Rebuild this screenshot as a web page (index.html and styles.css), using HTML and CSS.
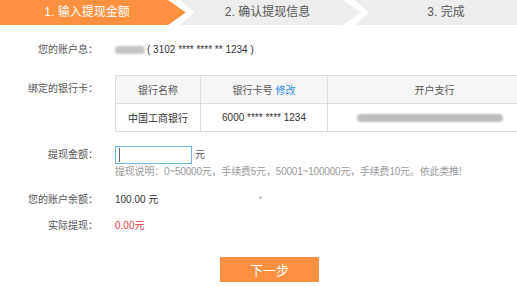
FILE: index.html
```html
<!DOCTYPE html>
<html lang="zh-CN">
<head>
<meta charset="utf-8">
<title>提现</title>
<link rel="stylesheet" href="styles.css">
</head>
<body>
<div class="page">
  <div class="steps">
    <div class="step step-active">1. 输入提现金额</div>
    <div class="step step-mid">2. 确认提现信息</div>
    <div class="step step-last">3. 完成</div>
  </div>
  <div class="form">
    <div class="row row-account">
      <div class="label">您的账户息：</div>
      <div class="value"><span class="blur-name"></span>( 3102 **** **** ** 1234 )</div>
    </div>
    <div class="row row-card">
      <div class="label">绑定的银行卡：</div>
      <table class="card-table">
        <colgroup><col class="c1"><col class="c2"><col class="c3"></colgroup>
        <thead>
          <tr><th>银行名称</th><th>银行卡号 <a class="edit" href="#">修改</a></th><th>开户支行</th></tr>
        </thead>
        <tbody>
          <tr><td>中国工商银行</td><td>6000 **** **** 1234</td><td><span class="blur-branch"></span></td></tr>
        </tbody>
      </table>
    </div>
    <div class="row row-amount">
      <div class="label">提现金额：</div>
      <div class="field">
        <span class="input-wrap"><input class="amount-input" type="text"><span class="caret"></span></span>
        <span class="unit">元</span>
      </div>
    </div>
    <div class="hint">提现说明：0~50000元，手续费5元，50001~100000元，手续费10元。依此类推!</div>
    <div class="row row-balance">
      <div class="label">您的账户余额：</div>
      <div class="value">100.00 元</div>
      <span class="dot"></span>
    </div>
    <div class="row row-actual">
      <div class="label">实际提现：</div>
      <div class="value value-red">0.00元</div>
    </div>
    <div class="actions">
      <button class="btn-next" type="button">下一步</button>
    </div>
  </div>
</div>
</body>
</html>
```
FILE: styles.css
```css
html, body {
  margin: 0;
  padding: 0;
  background: #fff;
  overflow: hidden;
}
body {
  font-family: "Liberation Sans", "Noto Sans CJK SC", sans-serif;
  width: 517px;
  height: 286px;
}
.page {
  width: 517px;
  overflow: hidden;
}

/* steps */
.steps {
  display: flex;
  height: 25px;
  background: #eeeeee;
  font-size: 12px;
  line-height: 25px;
  color: #555;
}
.step {
  position: relative;
  text-align: center;
  white-space: nowrap;
  box-sizing: border-box;
}
.step-active {
  width: 180px;
  padding-right: 6px;
  background: #fd913f;
  color: #fff;
}
.step-mid {
  width: 175px;
  padding-left: 0;
}
.step-last {
  flex: 1;
  padding-left: 20px;
}
.step-active::before {
  content: "";
  position: absolute;
  left: 168px;
  top: 0;
  width: 18px;
  height: 25px;
  background: #fd913f;
  clip-path: polygon(0 0, 100% 50%, 0 100%);
  z-index: 1;
}
.step-active::after,
.step-mid::after {
  content: "";
  position: absolute;
  top: 0;
  left: calc(100% - 12px);
  width: 26px;
  height: 25px;
  background: #fff;
  clip-path: polygon(0 0, 12px 0, 26px 50%, 12px 100%, 0 100%, 18px 50%);
  z-index: 2;
}

/* form */
.form {
  padding-top: 15px;
  font-size: 10px;
  color: #333;
}
.row {
  display: flex;
  align-items: flex-start;
  position: relative;
}
.label {
  width: 98px;
  flex: none;
  margin-right: 17px;
  text-align: right;
  color: #555;
}
.row-account {
  line-height: 20px;
}
.blur-name {
  display: inline-block;
  width: 30px;
  height: 8px;
  margin-right: 2px;
  vertical-align: -1px;
  background: #c4c4c4;
  border-radius: 4px;
  filter: blur(1.2px);
}
.row-card {
  margin-top: 15px;
}
.row-card .label {
  line-height: 28px;
}
.card-table {
  border-collapse: collapse;
  width: 426px;
  flex: none;
  table-layout: fixed;
  font-size: 10px;
}
.card-table .c1 { width: 85px; }
.card-table .c2 { width: 127px; }
.card-table .c3 { width: 214px; }
.card-table th,
.card-table td {
  border: 1px solid #dddddd;
  height: 27px;
  padding: 0;
  text-align: center;
  font-weight: normal;
}
.card-table th {
  background: #f6f6f6;
  color: #555;
}
.card-table td {
  color: #333;
}
.edit {
  color: #2e8ded;
  text-decoration: none;
}
.blur-branch {
  display: inline-block;
  width: 146px;
  height: 8px;
  margin-left: -10px;
  vertical-align: middle;
  background: #bdbdbd;
  border-radius: 4px;
  filter: blur(1.2px);
}
.row-amount {
  margin-top: 14px;
  line-height: 18px;
}
.field {
  display: flex;
  align-items: center;
}
.input-wrap {
  position: relative;
  display: block;
  width: 77px;
  height: 18px;
}
.amount-input {
  display: block;
  width: 77px;
  height: 18px;
  box-sizing: border-box;
  margin: 0;
  padding: 0;
  border: 1px solid #6db5ea;
  outline: none;
  background: #fff;
}
.caret {
  position: absolute;
  left: 4px;
  top: 2px;
  width: 1px;
  height: 14px;
  background: #666;
}
.unit {
  margin-left: 3px;
  color: #555;
}
.hint {
  margin-top: 1px;
  margin-left: 115px;
  line-height: 14px;
  color: #999;
  white-space: nowrap;
  letter-spacing: -0.2px;
}
.row-balance {
  margin-top: 11px;
  line-height: 20px;
}
.dot {
  position: absolute;
  left: 259px;
  top: 6px;
  width: 3px;
  height: 3px;
  border-radius: 50%;
  background: #c8c8c8;
}
.row-actual {
  margin-top: 6px;
  line-height: 20px;
}
.value-red {
  color: #e8383d;
}
.actions {
  margin-top: 21px;
  padding-left: 220px;
}
.btn-next {
  display: block;
  width: 99px;
  height: 25px;
  border: none;
  padding: 0;
  background: #fd913f;
  color: #fff;
  font-family: "Liberation Sans", "Noto Sans CJK SC", sans-serif;
  font-size: 13px;
  cursor: pointer;
}
```
